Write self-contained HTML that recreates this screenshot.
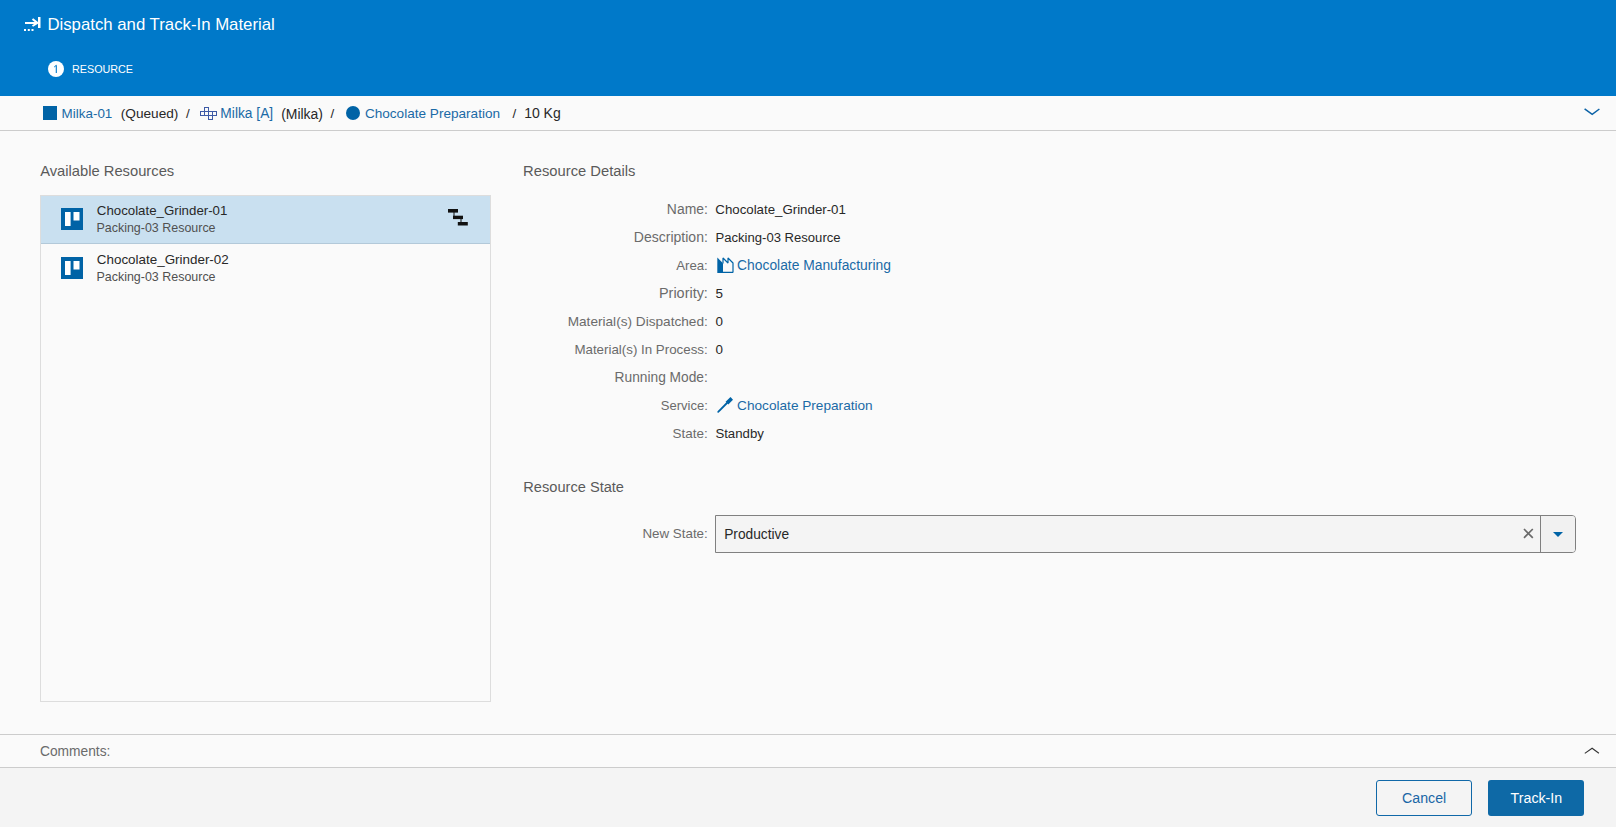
<!DOCTYPE html>
<html><head><meta charset="utf-8"><style>
html,body{margin:0;padding:0;width:1616px;height:827px;overflow:hidden;background:#fafafa;font-family:"Liberation Sans",sans-serif;position:relative}
.t{position:absolute;white-space:nowrap;line-height:1}
.btn{position:absolute;box-sizing:border-box;border-radius:4px;font-size:13.7px;line-height:33px;text-align:center}
</style></head><body>
<div style="position:absolute;left:0px;top:0px;width:1616px;height:96px;background:#0079c9"></div>
<div style="position:absolute;left:0px;top:96px;width:1616px;height:35px;background:#fafafa;border-bottom:1px solid #cccccc;box-sizing:border-box"></div>
<svg style="position:absolute;left:0;top:0" width="60" height="40">
<rect x="38" y="17" width="2.5" height="11" fill="#fff"/>
<rect x="25" y="22" width="12" height="2" fill="#fff"/>
<path d="M32.5 19 L37.5 23 L32.5 26" fill="none" stroke="#fff" stroke-width="2"/>
<rect x="24" y="29" width="2" height="2" fill="#fff"/>
<rect x="27.8" y="29" width="2" height="2" fill="#fff"/>
<rect x="31.5" y="29" width="2" height="2" fill="#fff"/>
</svg>
<div class="t" style="left:47.42px;top:17.00px;font-size:16.776px;color:#ffffff;">Dispatch and Track-In Material</div>
<div style="position:absolute;left:48px;top:61px;width:16px;height:16px;background:#fff;border-radius:50%"></div>
<svg style="position:absolute;left:48px;top:61px" width="16" height="16"><path d="M8.3 4.2 V12" stroke="#0079c9" stroke-width="1.1" fill="none"/><path d="M8.3 4.3 L6.2 6" stroke="#0079c9" stroke-width="1" fill="none"/></svg>
<div class="t" style="left:71.92px;top:64.00px;font-size:11.8px;color:#ffffff;transform:scaleX(0.9129);transform-origin:0 0">RESOURCE</div>
<div style="position:absolute;left:43px;top:106px;width:14px;height:14px;background:#0063a6"></div>
<div class="t" style="left:61.60px;top:107.00px;font-size:13.432px;color:#1b6aa6;">Milka-01</div>
<div class="t" style="left:120.75px;top:107.00px;font-size:13.652px;color:#282828;">(Queued)</div>
<div class="t" style="left:186.00px;top:107.00px;font-size:13.4px;color:#282828;">/</div>
<svg style="position:absolute;left:0;top:0" width="230" height="130" shape-rendering="crispEdges">
<rect x="204" y="107" width="5" height="1" fill="#3d5aa6"/>
<rect x="204" y="107" width="1" height="5" fill="#3d5aa6"/>
<rect x="208" y="107" width="1" height="5" fill="#3d5aa6"/>
<rect x="200" y="111" width="17" height="1" fill="#3d5aa6"/>
<rect x="200" y="115" width="17" height="1" fill="#3d5aa6"/>
<rect x="200" y="111" width="1" height="5" fill="#3d5aa6"/>
<rect x="204" y="111" width="1" height="5" fill="#3d5aa6"/>
<rect x="208" y="111" width="1" height="9" fill="#3d5aa6"/>
<rect x="212" y="111" width="1" height="9" fill="#3d5aa6"/>
<rect x="216" y="111" width="1" height="5" fill="#3d5aa6"/>
<rect x="208" y="119" width="5" height="1" fill="#3d5aa6"/>
</svg>
<div class="t" style="left:220.37px;top:107.00px;font-size:13.777px;color:#1b6aa6;">Milka [A]</div>
<div class="t" style="left:281.13px;top:107.00px;font-size:13.978px;color:#282828;">(Milka)</div>
<div class="t" style="left:330.60px;top:107.00px;font-size:13.4px;color:#282828;">/</div>
<div style="position:absolute;left:346px;top:106px;width:14px;height:14px;background:#0063a6;border-radius:50%"></div>
<div class="t" style="left:364.92px;top:107.00px;font-size:13.593px;color:#1b6aa6;">Chocolate Preparation</div>
<div class="t" style="left:512.40px;top:107.00px;font-size:13.4px;color:#282828;">/</div>
<div class="t" style="left:524.13px;top:106.00px;font-size:14.026px;color:#282828;">10 Kg</div>
<svg style="position:absolute;left:1576px;top:100px" width="32" height="24">
<path d="M8.6 8.8 L16.2 14.4 L23.4 9" fill="none" stroke="#0b62a6" stroke-width="1.5"/>
</svg>
<div class="t" style="left:40.17px;top:164.00px;font-size:14.746px;color:#5a5a5a;">Available Resources</div>
<div style="position:absolute;left:40px;top:195px;width:451px;height:507px;border:1px solid #dddddd;box-sizing:border-box"></div>
<div style="position:absolute;left:41px;top:196px;width:449px;height:48px;background:#c9e0f0;border-bottom:1px solid #b3c9d9;box-sizing:border-box"></div>
<svg style="position:absolute;left:61px;top:208px" width="22" height="22">
<rect x="0" y="0" width="22" height="22" fill="#0063a6"/>
<rect x="4" y="4" width="5.6" height="14" fill="#fff"/>
<rect x="12.5" y="4" width="6" height="8.5" fill="#fff"/>
</svg>
<svg style="position:absolute;left:61px;top:257px" width="22" height="22">
<rect x="0" y="0" width="22" height="22" fill="#0063a6"/>
<rect x="4" y="4" width="5.6" height="14" fill="#fff"/>
<rect x="12.5" y="4" width="6" height="8.5" fill="#fff"/>
</svg>
<div class="t" style="left:96.84px;top:204.00px;font-size:13.285px;color:#282828;">Chocolate_Grinder-01</div>
<div class="t" style="left:96.48px;top:222.00px;font-size:12.466px;color:#505050;">Packing-03 Resource</div>
<div class="t" style="left:96.83px;top:253.00px;font-size:13.422px;color:#282828;">Chocolate_Grinder-02</div>
<div class="t" style="left:96.48px;top:271.00px;font-size:12.466px;color:#505050;">Packing-03 Resource</div>
<svg style="position:absolute;left:440px;top:200px" width="40" height="34">
<rect x="8" y="9" width="10" height="3.6" fill="#111"/>
<rect x="13" y="15.7" width="10" height="3.4" fill="#111"/>
<rect x="17.8" y="22" width="10" height="3.5" fill="#111"/>
<rect x="13.5" y="12" width="1" height="4" fill="#111"/>
<rect x="20.5" y="19" width="1" height="3.5" fill="#111"/>
</svg>
<div class="t" style="left:523.09px;top:164.00px;font-size:14.768px;color:#5a5a5a;">Resource Details</div>
<div class="t" style="left:666.86px;top:203.00px;font-size:13.925px;color:#6b6b6b;">Name:</div>
<div class="t" style="left:715.34px;top:203.00px;font-size:13.285px;color:#282828;">Chocolate_Grinder-01</div>
<div class="t" style="left:633.85px;top:230.00px;font-size:14.023px;color:#6b6b6b;">Description:</div>
<div class="t" style="left:715.53px;top:231.00px;font-size:13.08px;color:#282828;">Packing-03 Resource</div>
<div class="t" style="left:676.17px;top:259.00px;font-size:13.24px;color:#6b6b6b;">Area:</div>
<div class="t" style="left:737.11px;top:259.00px;font-size:13.831px;color:#1b6aa6;">Chocolate Manufacturing</div>
<div class="t" style="left:659.02px;top:286.00px;font-size:14.428px;color:#6b6b6b;">Priority:</div>
<div class="t" style="left:715.46px;top:287.00px;font-size:13.4px;color:#282828;">5</div>
<div class="t" style="left:567.68px;top:315.00px;font-size:13.633px;color:#6b6b6b;">Material(s) Dispatched:</div>
<div class="t" style="left:715.49px;top:315.00px;font-size:13.4px;color:#282828;">0</div>
<div class="t" style="left:574.41px;top:343.00px;font-size:13.339px;color:#6b6b6b;">Material(s) In Process:</div>
<div class="t" style="left:715.49px;top:343.00px;font-size:13.4px;color:#282828;">0</div>
<div class="t" style="left:614.57px;top:371.00px;font-size:13.756px;color:#6b6b6b;">Running Mode:</div>
<div class="t" style="left:660.80px;top:399.00px;font-size:13.011px;color:#6b6b6b;">Service:</div>
<div class="t" style="left:737.12px;top:399.00px;font-size:13.644px;color:#1b6aa6;">Chocolate Preparation</div>
<div class="t" style="left:672.58px;top:427.00px;font-size:13.489px;color:#6b6b6b;">State:</div>
<div class="t" style="left:715.39px;top:427.00px;font-size:13.225px;color:#282828;">Standby</div>
<svg style="position:absolute;left:710px;top:250px" width="30" height="30">
<path d="M7.3 7.4 L13 13.2 V22.9 H7.3 Z" fill="#0063a6"/>
<path d="M13 13.4 V8 L18 13 V8 L23 13 V22.3 H8" fill="none" stroke="#0063a6" stroke-width="1.2" stroke-linejoin="bevel"/>
</svg>
<svg style="position:absolute;left:710px;top:390px" width="30" height="30">
<path d="M17 13 L8.2 21.8" stroke="#0063a6" stroke-width="1.8" stroke-linecap="round" fill="none"/>
<path d="M20.5 7 L23 9.7 L18.3 14.5 L15.6 11.8 Z" fill="#0063a6"/>
</svg>
<div class="t" style="left:523.30px;top:480.00px;font-size:14.617px;color:#5a5a5a;">Resource State</div>
<div class="t" style="left:642.40px;top:527.00px;font-size:13.374px;color:#6b6b6b;">New State:</div>
<div style="position:absolute;left:715px;top:515px;width:861px;height:38px;border:1px solid #808080;border-radius:0 4px 4px 0;background:#f4f4f4;box-sizing:border-box"></div>
<div style="position:absolute;left:1540px;top:516px;width:35px;height:36px;background:#f1f1f1;border-left:1px solid #808080;box-sizing:border-box;border-radius:0 3px 3px 0"></div>
<div class="t" style="left:724.17px;top:528.00px;font-size:13.745px;color:#282828;">Productive</div>
<svg style="position:absolute;left:1520px;top:525px" width="18" height="18">
<path d="M4 4 L12.8 12.8 M12.8 4 L4 12.8" stroke="#6a6a6a" stroke-width="1.7" fill="none"/>
</svg>
<svg style="position:absolute;left:1550px;top:528px" width="16" height="12">
<path d="M3 4 H13 L8 9 Z" fill="#0063a6"/>
</svg>
<div style="position:absolute;left:0px;top:734px;width:1616px;height:1px;background:#cccccc"></div>
<div class="t" style="left:40.01px;top:745.00px;font-size:13.783px;color:#6b6b6b;">Comments:</div>
<svg style="position:absolute;left:1576px;top:738px" width="32" height="24">
<path d="M8.8 15.4 L16.1 10.2 L22.9 15.3" fill="none" stroke="#333" stroke-width="1.1"/>
</svg>
<div style="position:absolute;left:0px;top:767px;width:1616px;height:1px;background:#cccccc"></div>
<div style="position:absolute;left:0px;top:768px;width:1616px;height:59px;background:#f4f4f4"></div>
<div style="position:absolute;left:1376px;top:780px;width:96px;height:36px;border:1px solid #1068a8;border-radius:3px;box-sizing:border-box"></div>
<div style="position:absolute;left:1488px;top:780px;width:96px;height:36px;background:#0e69a6;border-radius:3px"></div>
<div class="t" style="left:1402.09px;top:791.00px;font-size:14.186px;color:#1a66a6;">Cancel</div>
<div class="t" style="left:1510.59px;top:791.00px;font-size:14.221px;color:#ffffff;">Track-In</div>
</body></html>
